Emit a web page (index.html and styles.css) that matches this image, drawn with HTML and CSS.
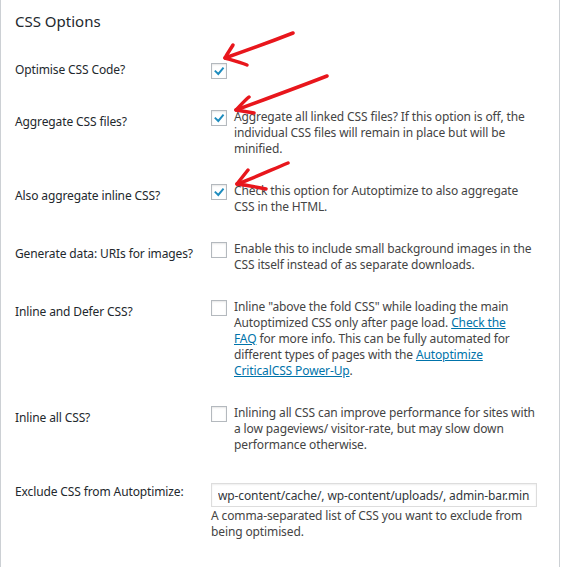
FILE: index.html
```html
<!DOCTYPE html>
<html>
<head>
<meta charset="utf-8">
<link rel="stylesheet" href="styles.css">
</head>
<body>
<div class="panel">
  <h2 class="title">CSS Options</h2>

  <div class="row row-first">
    <div class="label">Optimise CSS Code?</div>
    <div class="field">
      <span class="cb checked"><svg viewBox="0 0 16 16"><path d="M3.2 7.6 L7.2 11.4 L13.2 4.2"/></svg></span>
    </div>
  </div>

  <div class="row">
    <div class="label">Aggregate CSS files?</div>
    <div class="field">
      <span class="cb checked"><svg viewBox="0 0 16 16"><path d="M3.2 7.6 L7.2 11.4 L13.2 4.2"/></svg></span>
      <span class="desc">Aggregate all linked CSS files? If this option is off, the individual CSS files will remain in place but will be minified.</span>
    </div>
  </div>

  <div class="row">
    <div class="label">Also aggregate inline CSS?</div>
    <div class="field">
      <span class="cb checked"><svg viewBox="0 0 16 16"><path d="M3.2 7.6 L7.2 11.4 L13.2 4.2"/></svg></span>
      <span class="desc">Check this option for Autoptimize to also aggregate CSS in the HTML.</span>
    </div>
  </div>

  <div class="row">
    <div class="label">Generate data: URIs for images?</div>
    <div class="field">
      <span class="cb"></span>
      <span class="desc">Enable this to include small background images in the CSS itself instead of as separate downloads.</span>
    </div>
  </div>

  <div class="row">
    <div class="label">Inline and Defer CSS?</div>
    <div class="field">
      <span class="cb"></span>
      <span class="desc">Inline "above the fold CSS" while loading the main Autoptimized CSS only after page load. <a href="#">Check the<br>FAQ</a> for more info. This can be fully automated for different types of pages with the <a href="#">Autoptimize CriticalCSS Power-Up</a>.</span>
    </div>
  </div>

  <div class="row">
    <div class="label">Inline all CSS?</div>
    <div class="field">
      <span class="cb"></span>
      <span class="desc">Inlining all CSS can improve performance for sites with a low pageviews/ visitor-rate, but may slow down performance otherwise.</span>
    </div>
  </div>

  <div class="row">
    <div class="label">Exclude CSS from Autoptimize:</div>
    <div class="field field-col">
      <input class="text" type="text" value="wp-content/cache/, wp-content/uploads/, admin-bar.min.css, dashicons.min.css">
      <span class="desc">A comma-separated list of CSS you want to exclude from being optimised.</span>
    </div>
  </div>

  <svg class="arrows" viewBox="0 0 561 567" width="561" height="567">
    <g>
      <path d="M293 33 C270 42 248 50 225 58"/>
      <path d="M233 45 C230 50 227 54 225 58 C232 60 240 62 247 65"/>
      <path d="M327 76 C296 88 266 99 236 110"/>
      <path d="M249 97 C244 101 240 106 236 110 C242 111 248 112 254 113"/>
      <path d="M288 163 C271 170 254 178 237 184"/>
      <path d="M248 170 C244 175 240 180 237 184 C246 185 256 187 266 189"/>
    </g>
  </svg>
</div>
</body>
</html>
```

FILE: styles.css
```css
html, body {
  margin: 0;
  padding: 0;
  background: #fff;
}

body {
  font-family: "Noto Sans", "Open Sans", sans-serif;
  font-size: 12px;
  letter-spacing: -0.12px;
  color: #23282d;
}

.panel {
  position: relative;
  box-sizing: border-box;
  width: 560px;
  height: 567px;
  border-left: 1px solid #ccd0d4;
  border-right: 1px solid #ccd0d4;
  background: #fff;
  padding-left: 14px;
  overflow: hidden;
}

.title {
  margin: 0;
  padding-top: 10px;
  margin-bottom: 12px;
  font-size: 15px;
  font-weight: 400;
  letter-spacing: 0;
  line-height: 22px;
  color: #23282d;
}

.row {
  display: grid;
  grid-template-columns: 196px 329px;
}

.label {
  padding-top: 18px;
  line-height: 16px;
  color: #23282d;
}

.field {
  display: flex;
  align-items: flex-start;
  gap: 7px;
  padding: 13px 0;
  line-height: 16px;
}

.row-first .field {
  height: 26px;
}

.row-first .cb {
  margin-top: 6px;
}

.field-col {
  flex-direction: column;
  gap: 0;
}

.cb {
  flex: none;
  box-sizing: border-box;
  width: 16px;
  height: 16px;
  margin-top: 1px;
  border: 1px solid #b4b9be;
  background: #fff;
  box-shadow: inset 0 1px 2px rgba(0, 0, 0, 0.1);
}

.cb svg {
  display: block;
  width: 14px;
  height: 14px;
}

.cb svg path {
  fill: none;
  stroke: #1e8cbe;
  stroke-width: 2.2;
  stroke-linejoin: miter;
}

.desc {
  color: #444;
}

.desc a {
  color: #0073aa;
  text-decoration: underline;
}

.text {
  box-sizing: border-box;
  width: 326px;
  height: 24px;
  margin: 4px 0 1px 0;
  padding: 2px 6px;
  border: 1px solid #ddd;
  box-shadow: inset 0 1px 2px rgba(0, 0, 0, 0.07);
  font-family: "Noto Sans", "Open Sans", sans-serif;
  font-size: 12px;
  letter-spacing: -0.12px;
  color: #32373c;
  background: #fff;
  outline: none;
}

.arrows {
  position: absolute;
  left: -1px;
  top: 0;
  pointer-events: none;
}

.arrows path {
  fill: none;
  stroke: #e8161c;
  stroke-width: 3.5;
  stroke-linecap: round;
  stroke-linejoin: round;
}
```
